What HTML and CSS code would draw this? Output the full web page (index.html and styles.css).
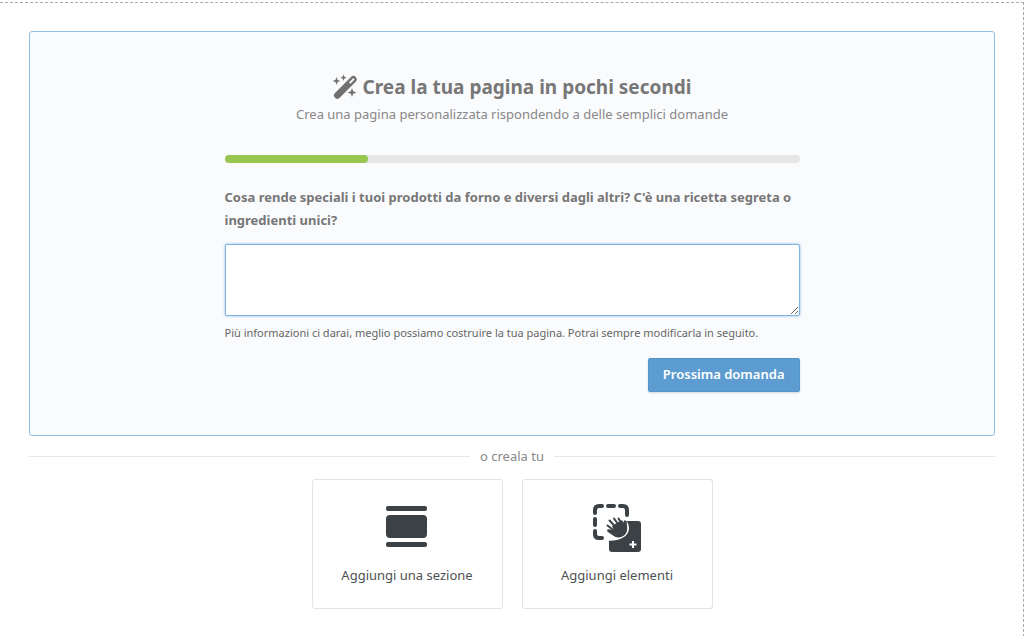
FILE: index.html
```html
<!DOCTYPE html>
<html lang="it">
<head>
  <meta charset="UTF-8">
  <meta name="viewport" content="width=device-width, initial-scale=1.0">
  <title>Crea la tua pagina</title>
  <link rel="stylesheet" href="styles.css">
</head>
<body>
  <main class="editor">
    <section class="wizard">
      <form class="wizard-form">
        <h1>
          <svg class="wand" viewBox="0 0 24 24" aria-hidden="true">
            <path d="M2 18 18 2a3.300 3.300 0 0 1 4.700 4.700L6.700 22.700A3.300 3.300 0 0 1 2 18z" />
            <path class="wand-tip" d="m16 7.400 3.800-3.800a.9.9 0 0 1 1.300 1.300l-3.800 3.800z" />
            <path d="M3.500 2 4.600 4.900 7.500 6 4.600 7.100 3.500 10 2.400 7.100-.5 6l2.900-1.100z" />
            <path d="m10.500-.5.9 2.300 2.300.9-2.300.9-.9 2.300-.9-2.300-2.300-.9 2.300-.9z" />
            <path d="m19 13 1.200 3.300 3.300 1.200-3.300 1.200L19 22l-1.200-3.300-3.300-1.200 3.300-1.200z" />
          </svg>
          Crea la tua pagina in pochi secondi
        </h1>
        <p class="subtitle">Crea una pagina personalizzata rispondendo a delle semplici domande</p>
        <div class="progress">
          <div class="progress-bar"></div>
        </div>
        <label for="answer">Cosa rende speciali i tuoi prodotti da forno e diversi dagli altri? C'è una ricetta segreta o ingredienti unici?</label>
        <textarea id="answer" aria-describedby="hint"></textarea>
        <p class="hint" id="hint">Più informazioni ci darai, meglio possiamo costruire la tua pagina. Potrai sempre modificarla in seguito.</p>
        <button class="next" type="button">Prossima domanda</button>
      </form>
    </section>

    <div class="divider">o creala tu</div>

    <div class="options">
      <button class="option" type="button">
        <svg viewBox="0 0 48 48" aria-hidden="true">
          <rect x="3" y="2" width="41" height="5" rx="2" />
          <rect x="3" y="11" width="41" height="23" rx="4" />
          <rect x="3" y="38" width="41" height="5" rx="2" />
        </svg>
        Aggiungi una sezione
      </button>
      <button class="option" type="button">
        <svg viewBox="0 0 48 48" aria-hidden="true">
          <rect x="16" y="17" width="32" height="31" rx="3" />
          <path class="gap" d="M14 36.500c10 1 22-3 22-12 0-3-1-6-3-8H15z" />
          <path class="dashes" d="M2 9V6q0-4 4-4h3M15 2h6M27 2h3q4 0 4 4v5M2 15v6M2 27v3q0 4 4 4h3" />
          <path d="m19 22 10-6 1.500 3c-.3-3.500 3-3.500 3.300-.5.400 5 1.200 8-1.300 11.500-3 4-9 4.500-12.500 1.500l-5-3.500c-2-1.500-.5-3.500 2-2.500l4 .8z" />
          <path class="fingers" d="m14.500 21.500 7 5.500M16.500 16.500l8 8.500M21 14.500l6 8.500M25.500 14.500l4 7" />
          <path class="plus" d="M40 37v7M36.500 40.500h7" />
        </svg>
        Aggiungi elementi
      </button>
    </div>
  </main>
</body>
</html>
```
FILE: styles.css
```css
* {
  box-sizing: border-box;
}

body {
  margin: 0;
  padding-top: 2px;
  background: #fff;
  color: #777;
  font-family: "Noto Sans", sans-serif;
  font-size: 13px;
}

.editor {
  min-height: calc(100vh - 2px);
  padding: 28px 28px 28px 29px;
  border-top: 1px dashed #aaa;
  border-right: 1px dashed #aaa;
}

.wizard {
  padding: 41px 24px 43px;
  border: 1px solid #91bee3;
  border-radius: 3px;
  background: #fafbfd;
}

.wizard-form {
  display: flex;
  flex-direction: column;
  max-width: 575px;
  margin: 0 auto;
}

h1 {
  display: flex;
  align-items: center;
  justify-content: center;
  gap: 6px;
  margin: 0;
  font-size: 19px;
  line-height: 28px;
}

.wand {
  width: 24px;
  height: 24px;
  fill: #707070;
  overflow: visible;
}

.wand .wand-tip {
  fill: #fafbfd;
}

.subtitle {
  margin: 3px 0 31px;
  color: #888;
  line-height: 20px;
  text-align: center;
}

.progress {
  height: 8px;
  border-radius: 4px;
  background: #e6e6e6;
}

.progress-bar {
  width: 25%;
  height: 100%;
  border-radius: 4px;
  background: #99c650;
}

label {
  margin: 23px 0 12px;
  font-weight: bold;
  line-height: 23px;
}

textarea {
  width: 100%;
  height: 72px;
  padding: 8px;
  border: 1px solid #7fb2dd;
  border-radius: 2px;
  outline: none;
  background: #fff;
  box-shadow: 0 0 3px #8cbce3;
  font: inherit;
  resize: vertical;
}

.hint {
  margin: 8px 0 16px;
  color: #666;
  font-size: 11px;
  line-height: 18px;
}

.next {
  align-self: flex-end;
  height: 34px;
  padding: 0 14px 2px;
  border: 1px solid #5595cb;
  border-radius: 2px;
  background: #5d9cd0;
  box-shadow: 0 1px 2px rgba(0, 0, 0, 0.15);
  color: #fff;
  font: 600 13px "Noto Sans", sans-serif;
  cursor: pointer;
}

.divider {
  display: flex;
  align-items: center;
  gap: 10px;
  margin: 10px 0 13px;
  color: #888;
  line-height: 20px;
}

.divider::before,
.divider::after {
  content: "";
  flex: 1;
  height: 1px;
  background: #e8e8e8;
}

.options {
  display: flex;
  justify-content: center;
  gap: 19px;
}

.option {
  display: flex;
  flex-direction: column;
  align-items: center;
  gap: 13px;
  width: 191px;
  height: 130px;
  padding: 24px 8px;
  border: 1px solid #e3e3e3;
  border-radius: 3px;
  background: #fff;
  color: #4c5154;
  font: 13px/20px "Noto Sans", sans-serif;
  cursor: pointer;
}

.option svg {
  width: 48px;
  height: 48px;
  fill: #3b4145;
  overflow: visible;
}

.option .gap {
  fill: #fff;
}

.option .dashes {
  fill: none;
  stroke: #3b4145;
  stroke-width: 4;
  stroke-linecap: round;
}

.option .fingers {
  fill: none;
  stroke: #3b4145;
  stroke-width: 2;
  stroke-linecap: round;
}

.option .plus {
  fill: none;
  stroke: #fff;
  stroke-width: 2;
}
```
